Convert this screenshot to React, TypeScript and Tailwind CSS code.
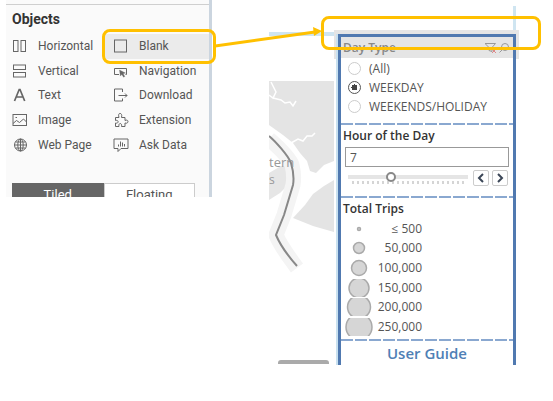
import { useState, type ReactNode } from "react";

const glyphs: Record<string, ReactNode> = {
  Horizontal: <><rect x="1.5" y="2.5" width="4.5" height="11" /><rect x="9" y="2.5" width="4.5" height="11" /></>,
  Blank: <rect x="1.5" y="2" width="12" height="12" />,
  Vertical: <><rect x="1.5" y="2" width="12" height="4.5" /><rect x="1.5" y="9.5" width="12" height="4.5" /></>,
  Navigation: <><path d="M6 11.500H1.500v-6h12v6H12.500" /><path d="M6.500 7l6 3-2.300.7 1.600 2.700-1.200.8-1.700-2.700-1.600 1.600z" fill="#666" strokeWidth=".3" /></>,
  Text: <path d="M2.500 14L7.200 2.500h.8L12.700 14M4.200 10h6.800" strokeWidth="1.700" />,
  Download: <path d="M9.500 5V2h-8v12h8v-2.500M5.500 8.500h8.500M12 6.500l2 2-2 2" />,
  Image: <><rect x="1" y="2.500" width="13.500" height="11" /><path d="M1 11.500l3.500-3 3 2L11.500 7l3 3M3.500 5.500h1.500" /></>,
  Extension: <path d="M2.500 5.500H6C4 0 10 0 8.500 5.500H12v3c4-2 4 4 0 2.500v3.500H8.500c1-4-3.500-4-2.500 0H2.500V11c3.500 1 3.500-3.500 0-2.500z" />,
  "Web Page": <><circle cx="8.500" cy="8" r="6" /><ellipse cx="8.500" cy="8" rx="2.700" ry="6" /><path d="M8.500 2v12M2.500 8h12M3.500 5h10M3.500 11h10" /></>,
  "Ask Data": <path d="M1 2h14v9.500H8L5 14.500v-3H1zM5.500 9.500V7.500M7.500 9.500v-5M9.500 9.500V5.500M11.500 9.500V7" />,
};

const rows = [
  ["Horizontal", "Blank"],
  ["Vertical", "Navigation"],
  ["Text", "Download"],
  ["Image", "Extension"],
  ["Web Page", "Ask Data"],
];

function ObjectButton({ name }: { name: string }) {
  return (
    <button className={"relative flex items-center gap-2.5 text-left " + (name === "Blank" ? "-ml-2 bg-[#ebebeb] pl-2" : "")}>
      <svg viewBox="0 0 16 16" className="size-4 shrink-0" fill="none" stroke="#666">{glyphs[name]}</svg>
      {name}
      {name === "Blank" && (
        <span className="pointer-events-none absolute -inset-y-[5px] -right-[7px] -left-[3px] z-10 rounded-lg border-3 border-[#ffc000]" />
      )}
    </button>
  );
}

function ObjectsPane() {
  return (
    <aside className="flex h-[197px] w-[206px] shrink-0 flex-col border-r-3 border-[#cbd5df] bg-[#fafafa] pt-1 font-['Roboto',sans-serif] text-[#555]">
      <div className="h-px shrink-0 bg-[#cfcfcf]" />
      <h2 className="mt-1 px-1.5 text-sm leading-5 font-bold text-[#333]">Objects</h2>
      <div className="mt-[5px] grid h-[123px] shrink-0 grid-rows-5 text-xs">
        {rows.map(([left, right]) => (
          <div key={left} className="grid grid-cols-[101px_1fr] pl-1.5">
            <ObjectButton name={left} />
            <ObjectButton name={right} />
          </div>
        ))}
      </div>
      <div className="mt-[26px] mr-[14px] ml-1.5 grid min-h-0 flex-1 grid-cols-2 overflow-hidden text-[13px]">
        <button className="h-6 bg-[#666] text-white">Tiled</button>
        <button className="h-6 border border-[#ccc] bg-white">Floating</button>
      </div>
    </aside>
  );
}

function MapView() {
  return (
    <div className="min-w-0 flex-1 pt-8">
      <div className="h-1 bg-[#cfe5f1]" />
      <svg viewBox="0 0 65 283" preserveAspectRatio="xMinYMin slice" className="mt-[45px] h-[283px] w-full">
        <rect width="65" height="283" fill="#fff" />
        <path d="M0 0H65V80L55 84 47 92 41 90 38 80 31 72 24 62 14 54 0 44Z" fill="#e4e4e4" />
        <path d="M65 99L55 105 44 113 36 124 24 137 44 145 65 151Z" fill="#e4e4e4" />
        <path d="M0 92L12 85 21 84 19 104 11 112 0 119Z" fill="#e6e6e6" />
        <path d="M0 53C10 60 18 72 24 86V102C23 112 8 140 7 149 10 157 18 164 27 154" fill="none" stroke="none" />
        <path d="M0 58C8 65 20 76 23 84 25 92 25 98 24 104L15 134 7 154C12 166 20 176 28 187" fill="none" stroke="#f4f4f4" strokeWidth="15" />
        <path d="M0 55C6 60 19 74 22 82 25 92 25 98 24 104L15 134 7 154C12 166 20 176 28 185" fill="none" stroke="#888" strokeWidth="2" />
        <path d="M0 14l4 3 3-6-5-10M4 17l8 2 4 3 5-1 3 4 3-5M22 62l7-4 5 2 4-5 5 0 3-3" fill="none" stroke="#fff" strokeWidth="1.500" />
        <text x="0" y="86" fontSize="13" fill="#999" fontFamily="Open Sans, sans-serif">tern</text>
        <text x="0" y="103" fontSize="12" fill="#999" fontFamily="Open Sans, sans-serif">s</text>
        <rect x="9" y="279" width="51" height="9" rx="3" fill="#aaa" />
      </svg>
    </div>
  );
}

const Dashes = () => (
  <div className="h-0.5 shrink-0 bg-[repeating-linear-gradient(90deg,#8aa8d0_0_12px,#fff_12px_14px)]" />
);

const sizes = [
  { label: "≤ 500", r: 1.5 },
  { label: "50,000", r: 5.5 },
  { label: "100,000", r: 7.5 },
  { label: "150,000", r: 10 },
  { label: "200,000", r: 11.5 },
  { label: "250,000", r: 13 },
];

function Filters() {
  const [day, setDay] = useState("WEEKDAY");
  const [hour, setHour] = useState(7);
  return (
    <section className="relative w-[185px] shrink-0 pt-[34px] font-['Open_Sans',sans-serif] text-xs text-[#555]">
      <div className="absolute top-1.5 right-[3px] h-7 w-[3px] bg-[#cfe5f1]" />
      <div className="absolute inset-x-0 top-[30px] h-[29px] bg-[#e5e5e5]" />
      <div className="relative mr-[3px] ml-0.5 border-l-2 border-[#c9e1f0]">
        <div className="flex flex-col border-3 border-b-0 border-[#5079b0]">
          <header className="flex h-[21px] shrink-0 items-center justify-between pr-1 pl-0.5">
            <h3 className="font-semibold text-[#888]">Day Type</h3>
            <svg viewBox="0 0 24 12" className="h-3 w-6" fill="none" stroke="#999"><path d="M0 1.500h10.500L7 5.500v4l-3-1v-3z" /><path d="M7 7l4 4m0-4l-4 4" stroke="#d88" /><circle cx="20" cy="5" r="3.500" /><path d="M17.500 7.500l-3 3" /></svg>
          </header>
          <fieldset className="flex h-[65px] shrink-0 flex-col bg-white pt-px">
            {["(All)", "WEEKDAY", "WEEKENDS/HOLIDAY"].map((name) => (
              <label key={name} className="flex h-[19px] items-center gap-2 pl-[7px]">
                <input type="radio" name="day" checked={day === name} onChange={() => setDay(name)} className="size-[13px] appearance-none rounded-full border border-[#ccc] checked:border-[#555] checked:bg-[radial-gradient(circle,#444_0_3px,#fff_3px)]" />
                {name}
              </label>
            ))}
          </fieldset>
          <Dashes />
          <label htmlFor="hour" className="h-[22px] pt-px pl-0.5 leading-5 font-semibold text-[#333]">Hour of the Day</label>
          <input id="hour" value={hour} onChange={(e) => setHour(Number(e.target.value) || 0)} className="mx-1 h-5 border border-[#999] px-1" />
          <div className="mt-[3px] mr-[5px] ml-[7px] flex h-4 gap-[3px]">
            <div className="mr-0.5 flex-1">
              <input type="range" aria-label="Hour" min={-1} max={22} value={hour} onChange={(e) => setHour(Number(e.target.value))} className="mt-[5px] block h-1 w-full appearance-none bg-[#e5e5e5] [&::-webkit-slider-thumb]:size-[10px] [&::-webkit-slider-thumb]:appearance-none [&::-webkit-slider-thumb]:rounded-full [&::-webkit-slider-thumb]:border-2 [&::-webkit-slider-thumb]:border-[#888] [&::-webkit-slider-thumb]:bg-white" />
              <div className="mx-1 mt-0.5 h-[3px] bg-[repeating-linear-gradient(90deg,#d5d5d5_0_2px,#fff_2px_5px)]" />
            </div>
            {[-1, 1].map((step) => (
              <button key={step} aria-label={step < 0 ? "Previous" : "Next"} onClick={() => setHour(hour + step)} className="flex size-4 items-center justify-center rounded-xs border border-[#ccc]">
                <svg viewBox="0 0 8 10" className="h-2.5 w-2 shrink-0" fill="none" stroke="#3b4657" strokeWidth="2"><path d={step < 0 ? "M6 1L2 5l4 4" : "M2 1l4 4-4 4"} /></svg>
              </button>
            ))}
          </div>
          <div className="h-2.5 shrink-0" />
          <Dashes />
          <h3 className="mt-px h-5 pl-0.5 leading-5 font-semibold text-[#333]">Total Trips</h3>
          <ul className="grid h-[118px] shrink-0 grid-rows-6">
            {sizes.map(({ label, r }) => (
              <li key={label} className="flex min-h-0 items-center">
                <svg viewBox="-16 -9 32 18" className="ml-0.5 h-[18px] w-8"><circle r={r} fill="#d6d6d6" stroke="#aaa" strokeWidth="1.500" /></svg>
                <span className="w-[47px] text-right">{label}</span>
              </li>
            ))}
          </ul>
          <div className="h-0.5" />
          <Dashes />
          <a href="#guide" className="text-center text-[15px] leading-6 font-semibold text-[#4f80b5]">User Guide</a>
        </div>
      </div>
      <div className="pointer-events-none absolute top-4 -right-[22px] -left-[13px] h-[34px] rounded-lg border-3 border-[#ffc000]" />
    </section>
  );
}

export default function App() {
  return (
    <main className="relative flex min-h-screen items-start bg-white pr-[34px] pl-1.5">
      <ObjectsPane />
      <div className="w-[57px] shrink-0" />
      <MapView />
      <Filters />
      <svg className="pointer-events-none absolute top-0 left-[215px] h-16 w-[110px]" viewBox="0 0 110 64"><path d="M0 46L100 32" stroke="#ffc000" strokeWidth="3" /><path d="M98 27l9 4-8 5z" fill="#ffc000" /></svg>
    </main>
  );
}
